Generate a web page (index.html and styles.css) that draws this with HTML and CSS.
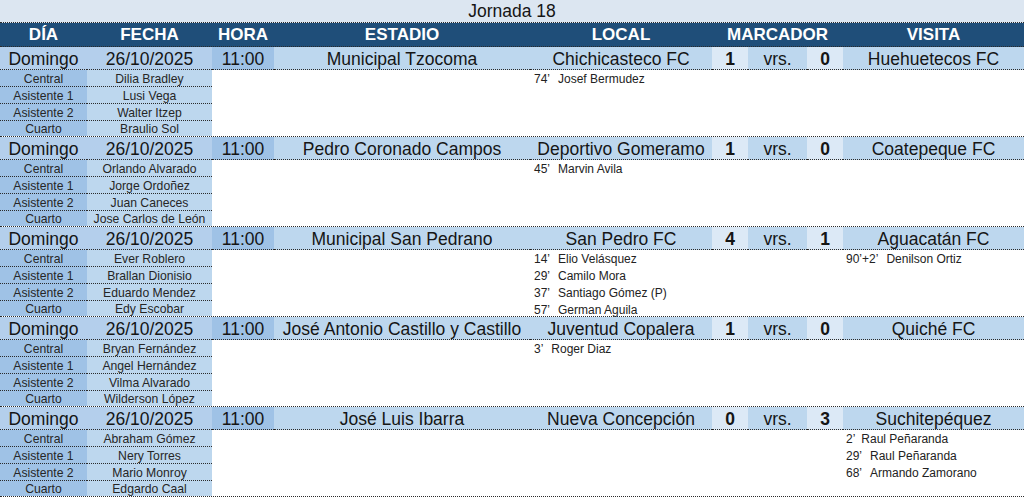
FILE: index.html
```html
<!DOCTYPE html>
<html lang="es">
<head>
<meta charset="utf-8">
<title>Jornada 18</title>
<link rel="stylesheet" href="styles.css">
</head>
<body>
<div class="sheet">
  <div class="title">Jornada 18</div>
  <div class="head">
    <div>DÍA</div><div>FECHA</div><div>HORA</div><div>ESTADIO</div><div>LOCAL</div><div class="marc">MARCADOR</div><div>VISITA</div>
  </div>

  <div class="match">
    <div class="m day">Domingo</div><div class="m day">26/10/2025</div><div class="m hour">11:00</div>
    <div class="m team">Municipal Tzocoma</div><div class="m team">Chichicasteco FC</div>
    <div class="m score">1</div><div class="m vrs">vrs.</div><div class="m score">0</div><div class="m team">Huehuetecos FC</div>

    <div class="role">Central</div><div class="ref">Dilia Bradley</div>
    <div class="loc"><span class="min">74’</span>Josef Bermudez</div><div class="vis"></div>
    <div class="role">Asistente 1</div><div class="ref">Lusi Vega</div>
    <div class="loc"></div><div class="vis"></div>
    <div class="role">Asistente 2</div><div class="ref">Walter Itzep</div>
    <div class="loc"></div><div class="vis"></div>
    <div class="role last">Cuarto</div><div class="ref last">Braulio Sol</div>
    <div class="loc"></div><div class="vis"></div>
  </div>

  <div class="match">
    <div class="m day">Domingo</div><div class="m day">26/10/2025</div><div class="m hour">11:00</div>
    <div class="m team">Pedro Coronado Campos</div><div class="m team">Deportivo Gomeramo</div>
    <div class="m score">1</div><div class="m vrs">vrs.</div><div class="m score">0</div><div class="m team">Coatepeque FC</div>

    <div class="role">Central</div><div class="ref">Orlando Alvarado</div>
    <div class="loc"><span class="min">45’</span>Marvin Avila</div><div class="vis"></div>
    <div class="role">Asistente 1</div><div class="ref">Jorge Ordoñez</div>
    <div class="loc"></div><div class="vis"></div>
    <div class="role">Asistente 2</div><div class="ref">Juan Caneces</div>
    <div class="loc"></div><div class="vis"></div>
    <div class="role last">Cuarto</div><div class="ref last">Jose Carlos de León</div>
    <div class="loc"></div><div class="vis"></div>
  </div>

  <div class="match">
    <div class="m day">Domingo</div><div class="m day">26/10/2025</div><div class="m hour">11:00</div>
    <div class="m team">Municipal San Pedrano</div><div class="m team">San Pedro FC</div>
    <div class="m score">4</div><div class="m vrs">vrs.</div><div class="m score">1</div><div class="m team">Aguacatán FC</div>

    <div class="role">Central</div><div class="ref">Ever Roblero</div>
    <div class="loc"><span class="min">14’</span>Elio Velásquez</div><div class="vis"><span class="min">90’+2’</span>Denilson Ortiz</div>
    <div class="role">Asistente 1</div><div class="ref">Brallan Dionisio</div>
    <div class="loc"><span class="min">29’</span>Camilo Mora</div><div class="vis"></div>
    <div class="role">Asistente 2</div><div class="ref">Eduardo Mendez</div>
    <div class="loc"><span class="min">37’</span>Santiago Gómez (P)</div><div class="vis"></div>
    <div class="role last">Cuarto</div><div class="ref last">Edy Escobar</div>
    <div class="loc"><span class="min">57’</span>German Aguila</div><div class="vis"></div>
  </div>

  <div class="match">
    <div class="m day">Domingo</div><div class="m day">26/10/2025</div><div class="m hour">11:00</div>
    <div class="m team">José Antonio Castillo y Castillo</div><div class="m team">Juventud Copalera</div>
    <div class="m score">1</div><div class="m vrs">vrs.</div><div class="m score">0</div><div class="m team">Quiché FC</div>

    <div class="role">Central</div><div class="ref">Bryan Fernández</div>
    <div class="loc"><span class="min">3’</span>Roger Diaz</div><div class="vis"></div>
    <div class="role">Asistente 1</div><div class="ref">Angel Hernández</div>
    <div class="loc"></div><div class="vis"></div>
    <div class="role">Asistente 2</div><div class="ref">Vilma Alvarado</div>
    <div class="loc"></div><div class="vis"></div>
    <div class="role last">Cuarto</div><div class="ref last">Wilderson López</div>
    <div class="loc"></div><div class="vis"></div>
  </div>

  <div class="match">
    <div class="m day">Domingo</div><div class="m day">26/10/2025</div><div class="m hour">11:00</div>
    <div class="m team">José Luis Ibarra</div><div class="m team">Nueva Concepción</div>
    <div class="m score">0</div><div class="m vrs">vrs.</div><div class="m score">3</div><div class="m team">Suchitepéquez</div>

    <div class="role">Central</div><div class="ref">Abraham Gómez</div>
    <div class="loc"></div><div class="vis"><span class="min short">2’</span>Raul Peñaranda</div>
    <div class="role">Asistente 1</div><div class="ref">Nery Torres</div>
    <div class="loc"></div><div class="vis"><span class="min">29’</span>Raul Peñaranda</div>
    <div class="role">Asistente 2</div><div class="ref">Mario Monroy</div>
    <div class="loc"></div><div class="vis"><span class="min">68’</span>Armando Zamorano</div>
    <div class="role last">Cuarto</div><div class="ref last">Edgardo Caal</div>
    <div class="loc"></div><div class="vis"></div>
  </div>
</div>
</body>
</html>
```

FILE: styles.css
```css
:root {
  --cols: 87px 125px 62px 256px 182px 36px 59px 36px 181px;
  --dot: 1px dotted #2b2b2b;
}

* {
  box-sizing: border-box;
  margin: 0;
  padding: 0;
}

body {
  margin: 0;
  width: 1024px;
  height: 498px;
  overflow: hidden;
  background: #ffffff;
  font-family: "Liberation Sans", Arial, sans-serif;
  color: #151515;
}

.sheet {
  width: 1024px;
}

.title {
  height: 23px;
  background: #dce6f1;
  border-bottom: var(--dot);
  text-align: center;
  font-size: 17.5px;
  line-height: 23px;
}

.head {
  display: grid;
  grid-template-columns: var(--cols);
  height: 24px;
  background: #1f4e79;
  border-bottom: var(--dot);
  color: #ffffff;
  font-weight: bold;
  font-size: 17px;
  line-height: 24px;
  text-align: center;
}

.head .marc {
  grid-column: span 3;
}

.match {
  display: grid;
  grid-template-columns: var(--cols);
  grid-template-rows: 23px 17px 17px 17px 15px;
  border-bottom: var(--dot);
}

.m {
  border-bottom: var(--dot);
  font-size: 17.5px;
  line-height: 24px;
  height: 23px;
  overflow: hidden;
  text-align: center;
  white-space: nowrap;
  background: #bdd7ee;
}

.m.day {
  background: #b4cfec;
}

.m.hour {
  background: #9fc2e6;
}

.m.score {
  background: #dce9f6;
  font-weight: bold;
}

.role,
.ref {
  font-size: 12.2px;
  line-height: 18px;
  height: 17px;
  overflow: hidden;
  text-align: center;
  color: #262626;
  white-space: nowrap;
  border-bottom: var(--dot);
}

.role {
  grid-column: 1;
  background: #9fc2e6;
}

.ref {
  grid-column: 2;
  background: #bdd7ee;
}

.role.last,
.ref.last {
  border-bottom: none;
  height: 15px;
  line-height: 16px;
}

.loc,
.vis {
  font-size: 12px;
  line-height: 18px;
  color: #222222;
  white-space: nowrap;
}

.loc {
  grid-column: 5 / 9;
  padding-left: 4px;
}

.vis {
  grid-column: 9;
  padding-left: 3px;
}

.min {
  margin-right: 8px;
}

.min.short {
  margin-right: 6px;
}
```
